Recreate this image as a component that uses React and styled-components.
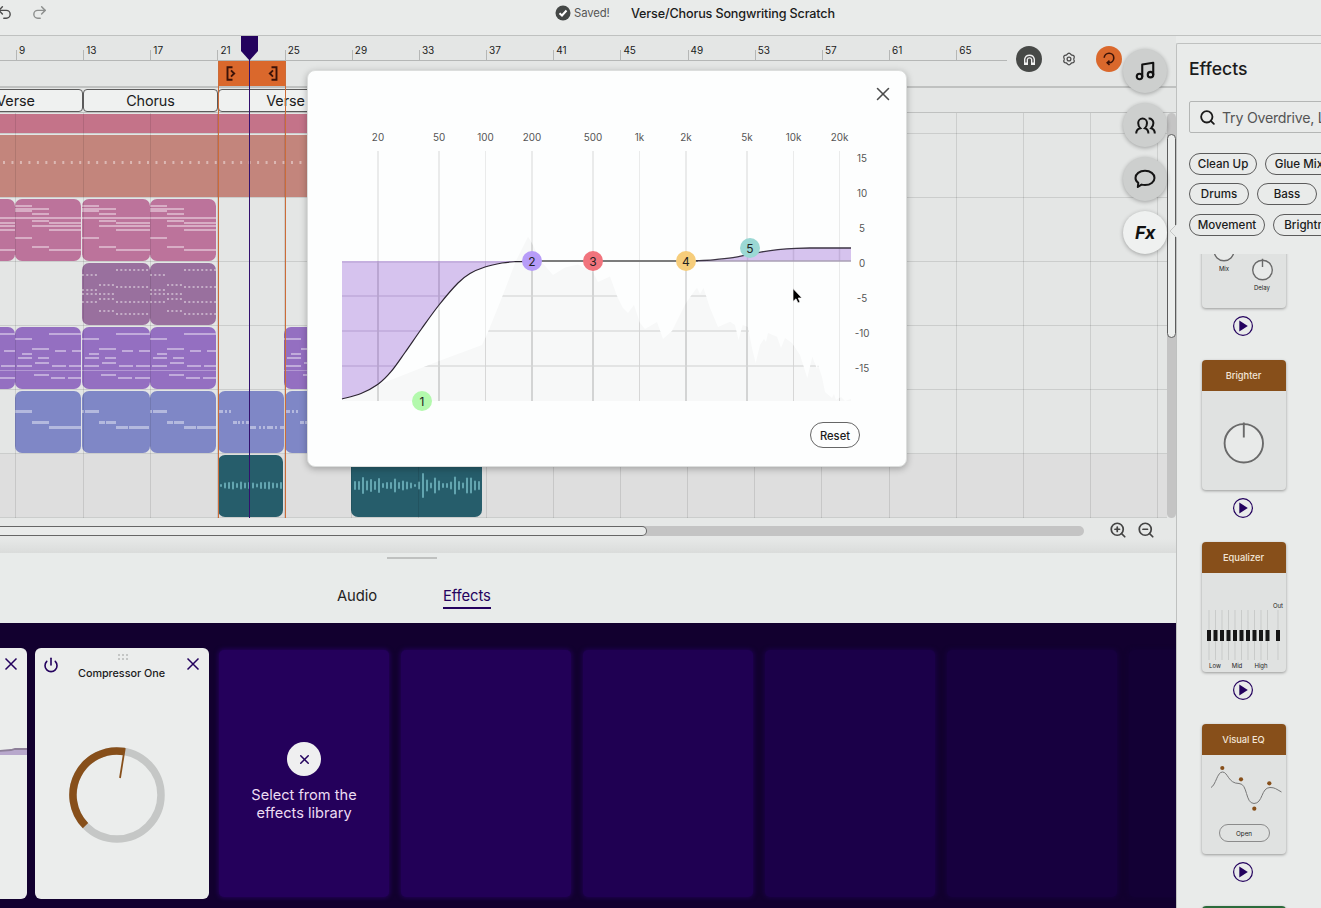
import React from "react";
import styled, { createGlobalStyle } from "styled-components";
import { Music, Power, Redo2, Search, Undo2, X, ZoomIn, ZoomOut } from "lucide-react";

const INK = "#24025e";
const BROWN = "#874f1a";

const GlobalStyle = createGlobalStyle`
  * {
    box-sizing: border-box;
  }
  body {
    margin: 0;
    overflow: hidden;
    background: #e9ebea;
    color: #1b1b1b;
    font-family: Inter, "Liberation Sans", sans-serif;
  }
  svg {
    display: block;
    flex: none;
  }
`;

const marks = [9, 13, 17, 21, 25, 29, 33, 37, 41, 45, 49, 53, 57, 61, 65];

// notes are [x, y, width, height] inside a clip
const chordNotes = [
  [0, 6, 17, 2],
  [0, 9, 17, 4],
  [17, 9, 17, 2],
  [17, 14, 17, 2],
  [0, 18, 68, 2],
  [17, 21, 17, 2],
  [34, 23, 34, 2],
  [17, 26, 17, 2],
  [34, 26, 34, 2],
  [34, 30, 34, 2],
  [0, 38, 17, 2],
  [17, 47, 17, 2],
  [34, 50, 34, 2],
];
const dotted = (x, y, n) => Array.from({ length: n }, (_, i) => [x + i * 4.3, y, 2, 2]);
const arpNotes = [
  ...[11, 26, 30, 38].flatMap((y) => dotted(0, y, 4)),
  ...[21, 30, 35, 47].flatMap((y) => dotted(17, y, 4)),
  ...[6, 23, 38, 50].flatMap((y) => dotted(34, y, 8)),
];
const leadNotes = [
  [34, 6, 34, 2],
  [0, 11, 17, 2],
  [17, 21, 17, 2],
  [40, 23, 11, 2],
  [57, 23, 11, 2],
  [7, 26, 10, 2],
  [3, 30, 14, 2],
  [23, 30, 11, 2],
  [20, 35, 14, 2],
  [2, 38, 15, 2],
  [37, 38, 14, 2],
  [54, 38, 14, 2],
  [19, 47, 15, 2],
  [36, 50, 14, 2],
  [53, 50, 15, 2],
  [0, 43, 68, 0.7],
];
const bassNotes = [
  [0, 19, 17, 3],
  [17, 30, 17, 3],
  [34, 35, 34, 3],
];
const bassNotesCut = [
  [0, 19, 2, 3],
  [3, 19, 14, 3],
  [17, 30, 6, 3],
  [24, 30, 10, 3],
  [34, 35, 12, 3],
  [47, 35, 20, 3],
];
const bassNotesFill = [
  [0, 19, 5, 3],
  [7, 19, 2, 3],
  [11, 19, 2, 3],
  [15, 30, 4, 3],
  [20, 30, 2, 3],
  [24, 30, 2, 3],
  [28, 30, 4, 3],
  [32, 35, 6, 3],
  [41, 35, 2, 3],
  [45, 35, 2, 3],
  [49, 35, 6, 3],
  [57, 35, 2, 3],
  [62, 35, 4, 3],
];
const kickNotes = Array.from({ length: 60 }, (_, i) => [3 + i * 8.47, 26, 2, 3]);

const waveA = [3, 6, 7, 8, 5, 8, 6, 7, 6, 4, 7, 7, 8, 6, 5, 7, 8, 9];
const waveB = [
  9, 9, 17, 10, 13, 9, 15, 5, 7, 7, 14, 7, 10, 8, 6, 3, 8, 25, 12, 6, 16, 10, 5, 5, 8, 18, 9, 6,
  16, 16, 10, 9,
];

const lanes = [
  { clips: [{ width: 500, color: "#c47389", flat: true }], height: 21 },
  { clips: [{ width: 500, color: "#c3857c", flat: true, notes: kickNotes }] },
  {
    clips: [
      { gap: -53, width: 68, color: "#bc739b", notes: chordNotes },
      { width: 66, color: "#bc739b", notes: chordNotes },
      { gap: 1, width: 68, color: "#bc739b", notes: chordNotes },
      { width: 66, color: "#bc739b", notes: chordNotes },
    ],
  },
  {
    clips: [
      { gap: 82, width: 68, color: "#99709e", notes: arpNotes },
      { width: 66, color: "#99709e", notes: arpNotes },
    ],
  },
  {
    clips: [
      { gap: -53, width: 68, color: "#946fc1", notes: leadNotes },
      { width: 66, color: "#946fc1", notes: leadNotes },
      { gap: 1, width: 68, color: "#946fc1", notes: leadNotes },
      { width: 66, color: "#946fc1", notes: leadNotes },
      { gap: 68, width: 68, color: "#946fc1", notes: leadNotes },
    ],
  },
  {
    clips: [
      { gap: 15, width: 66, color: "#7f87c6", notes: bassNotes },
      { gap: 1, width: 68, color: "#7f87c6", notes: bassNotesCut },
      { width: 66, color: "#7f87c6", notes: bassNotesCut },
      { gap: 2, width: 66, color: "#7f87c6", notes: bassNotesFill },
      { gap: 1, width: 68, color: "#7f87c6", notes: bassNotesFill },
    ],
  },
  {
    selected: true,
    clips: [
      { gap: 218, width: 65, color: "#265d6b", wave: waveA, waveX: 2 },
      { gap: 68, width: 131, color: "#265d6b", wave: waveB, waveX: 3 },
    ],
  },
];

const Page = styled.div`
  position: relative;
  display: flex;
  flex-direction: column;
  width: 1321px;
  height: 908px;
  overflow: hidden;
`;

const TopBar = styled.header`
  display: flex;
  flex: none;
  height: 36px;
  padding-bottom: 9px;
  align-items: center;
  border-bottom: 1px solid #bfc1c0;
`;
const History = styled.div`
  display: flex;
  width: 555px;
  margin-left: -4px;
  padding-bottom: 2px;
  gap: 18px;
  color: #4b4b4b;
  svg:last-child {
    color: #8d8f8e;
  }
`;
const Saved = styled.div`
  display: flex;
  align-items: center;
  gap: 3px;
  width: 76px;
  font-size: 11.3px;
  letter-spacing: -0.1px;
  color: #555;
  margin-left: 4px;
  svg {
    margin-bottom: 1px;
  }
`;
const ProjectName = styled.div`
  font-size: 12.6px;
  font-weight: 500;
  white-space: nowrap;
  letter-spacing: -0.15px;
`;

const Body = styled.div`
  display: flex;
  height: 872px;
`;
const Workspace = styled.main`
  display: flex;
  flex-direction: column;
  width: 1176px;
  flex: none;
`;

const Timeline = styled.section`
  position: relative;
  height: 482px;
  background: #e4e6e5;
  overflow: hidden;
`;
const TimelineHead = styled.div`
  display: flex;
  height: 52px;
  border-bottom: 2px solid #bfc1c0;
`;
const RulerColumn = styled.div`
  width: 1007px;
  overflow: hidden;
`;
const Ruler = styled.div`
  display: flex;
  align-items: flex-end;
  height: 25px;
  padding-left: 16px;
  border-bottom: 1px solid #b5b7b6;
`;
const Mark = styled.div`
  display: flex;
  flex: none;
  width: 67.17px;
  height: 10px;
  padding-left: 2px;
  border-left: 1px solid #b5b7b6;
  font-size: 10px;
  line-height: 1;
  span {
    margin-top: -5px;
  }
`;
const LoopRegion = styled.div`
  display: flex;
  justify-content: space-between;
  align-items: center;
  width: 67px;
  height: 26px;
  margin-left: 218px;
  padding: 0 7px 2px 8px;
  background: #da682c;
`;
const Tools = styled.div`
  display: flex;
  align-items: center;
  gap: 14px;
  padding: 0 0 4px 9px;
`;
const Tool = styled.div`
  display: flex;
  align-items: center;
  justify-content: center;
  width: 26px;
  height: 26px;
  border-radius: 50%;
  background: ${(p) => p.$bg || "transparent"};
`;
const Sections = styled.div`
  display: flex;
  height: 25px;
  margin-left: -52px;
  padding-bottom: 1px;
  border-bottom: 1px solid #bfc1c0;
`;
const Section = styled.div`
  flex: none;
  width: 135px;
  height: 23px;
  margin-top: 1px;
  border: 1px solid #5b5b5b;
  border-radius: 4px;
  background: #eff1f0;
  font-size: 14.4px;
  letter-spacing: -0.1px;
  line-height: 22px;
  text-align: center;
`;
const LaneArea = styled.div`
  display: flex;
  height: 405px;
`;
const LaneGrid = styled.div`
  position: relative;
  width: 1167px;
  overflow: hidden;
`;
const Lane = styled.div`
  display: flex;
  height: ${(p) => p.$height || 64}px;
  border-bottom: 1px solid #cbcdcc;
  background: ${(p) => (p.$selected ? "#dedede" : "transparent")};
`;
const ClipBox = styled.div`
  flex: none;
  width: ${(p) => p.$width}px;
  height: ${(p) => (p.$flat && p.$short ? 19 : 62)}px;
  margin: 1px 0 0 ${(p) => p.$gap || 0}px;
  border-radius: ${(p) => (p.$flat ? 0 : 7)}px;
  background: ${(p) => p.$color};
  overflow: hidden;
`;
const GridLines = styled.div`
  position: absolute;
  inset: 0;
  display: flex;
  padding-left: 15.4px;
  i {
    flex: none;
    width: 67.18px;
    border-left: 1px solid rgba(0, 0, 0, 0.1);
  }
`;
const RowScroll = styled.div`
  width: 9px;
  padding-top: 21px;
  border-radius: 5px;
  background: #c4c4c4;
`;
const RowThumb = styled.div`
  width: 9px;
  height: 204px;
  border: 1px solid #5c5c5c;
  border-radius: 5px;
  background: #eceeed;
`;
const Guide = styled.div`
  position: absolute;
  top: ${(p) => p.$top}px;
  bottom: 0;
  left: ${(p) => p.$left}px;
  width: 1px;
  background: ${(p) => p.$color};
`;
const Playhead = styled.svg`
  position: absolute;
  top: 0;
  left: 241px;
`;

const ScrollStrip = styled.div`
  display: flex;
  align-items: center;
  height: 35px;
  padding-bottom: 9px;
  background: linear-gradient(#e6e8e7 60%, #dadcdb);
`;
const SongScroll = styled.div`
  width: 1084px;
  height: 10px;
  border-radius: 0 5px 5px 0;
  background: #c4c4c4;
`;
const SongThumb = styled.div`
  width: 647px;
  height: 10px;
  border: 1px solid #666;
  border-left: 0;
  border-radius: 0 5px 5px 0;
  background: #e9ebea;
`;
const ZoomButtons = styled.div`
  display: flex;
  gap: 10px;
  margin-left: 25px;
  padding-bottom: 2px;
  color: #444;
`;

const TabBar = styled.div`
  height: 70px;
  padding-top: 4px;
  background: #e8ebea;
`;
const DragHandle = styled.div`
  width: 50px;
  height: 2px;
  margin-left: 387px;
  background: #bfc1c0;
`;
const Tabs = styled.nav`
  display: flex;
  gap: 66px;
  padding: 26px 0 0 337px;
`;
const Tab = styled.div`
  height: 24px;
  font-size: 14.8px;
  letter-spacing: -0.1px;
  line-height: 22px;
  color: ${(p) => (p.$active ? INK : "#222")};
  border-bottom: 2px solid ${(p) => (p.$active ? INK : "transparent")};
`;

const Rack = styled.section`
  display: flex;
  gap: 8px;
  flex: 1;
  padding: 25px 0 9px;
  overflow: hidden;
  background: #12002f;
`;
const Pedal = styled.article`
  display: flex;
  flex-direction: column;
  flex: none;
  width: 174px;
  margin-left: ${(p) => p.$offset || 0}px;
  padding: ${(p) => (p.$offset ? "0" : "5px 9px 5px 8px")};
  border-radius: 6px;
  background: #ebedec;
  color: ${INK};
  overflow: hidden;
`;
const PedalTop = styled.div`
  display: flex;
  justify-content: space-between;
  height: 20px;
  > svg {
    margin-top: 4px;
  }
  > svg:nth-child(2) {
    margin-top: 0;
  }
  > svg:last-child {
    margin-top: 3px;
  }
`;
const PedalName = styled.div`
  margin-top: -5px;
  font-size: 10.8px;
  font-weight: 500;
  letter-spacing: -0.03px;
  line-height: 12px;
  color: #1b1b1b;
  text-align: center;
`;
const Slot = styled.article`
  display: flex;
  flex-direction: column;
  align-items: center;
  flex: none;
  width: 170px;
  margin: 2px;
  padding-top: 92px;
  border-radius: 5px;
  background: ${(p) => p.$color};
  box-shadow: 0 0 4px 1px ${(p) => p.$color};
  color: #ecdcf2;
  font-size: 14.6px;
  line-height: 18px;
  text-align: center;
`;
const AddButton = styled.div`
  display: flex;
  align-items: center;
  justify-content: center;
  width: 34px;
  height: 34px;
  margin-bottom: 10px;
  padding-left: 1px;
  border-radius: 50%;
  background: #efeff0;
  color: ${INK};
`;

const Panel = styled.aside`
  flex: 1;
  margin-top: 7px;
  padding-left: 12px;
  border: 1px solid #bfc1c0;
  border-width: 1px 0 0 1px;
  border-radius: 2px 0 0 0;
  background: #e9ebea;
  overflow: hidden;
`;
const PanelTitle = styled.h2`
  margin: 12px 0 19px;
  font-size: 17.6px;
  font-weight: 500;
  line-height: 26px;
`;
const SearchBox = styled.div`
  display: flex;
  align-items: center;
  gap: 6px;
  width: 220px;
  height: 32px;
  padding-left: 9px;
  border: 1px solid #b4b6b5;
  border-radius: 2px;
  color: #555;
  font-size: 14.2px;
  letter-spacing: -0.25px;
  white-space: nowrap;
  svg {
    color: #1b1b1b;
  }
`;
const ChipRow = styled.div`
  display: flex;
  gap: 8px;
  margin-top: ${(p) => p.$top}px;
`;
const Chip = styled.div`
  flex: none;
  width: ${(p) => p.$width}px;
  height: 22px;
  border: 1px solid #5b5b5b;
  border-radius: 11px;
  font-size: 11.6px;
  font-weight: 500;
  line-height: 20px;
  text-align: center;
  white-space: nowrap;
`;
const Library = styled.div`
  height: 654px;
  margin-top: 18px;
  overflow: hidden;
`;
const LibraryList = styled.div`
  display: flex;
  flex-direction: column;
  width: 108px;
  margin-top: -76px;
`;
const LibraryItem = styled.div`
  display: flex;
  flex-direction: column;
  align-items: center;
  gap: 8px;
  height: 182px;
  flex: none;
`;
const EffectCard = styled.div`
  width: 84px;
  height: 130px;
  margin-left: 1px;
  border-radius: 4px;
  background: #e0e2e1;
  box-shadow: 0 1px 3px rgba(0, 0, 0, 0.35);
  overflow: hidden;
`;
const EffectName = styled.div`
  height: 31px;
  background: ${(p) => p.$color};
  color: #f3e6d8;
  font-size: 9.3px;
  font-weight: 500;
  line-height: 32px;
  text-align: center;
`;

const Rail = styled.div`
  position: absolute;
  top: 49px;
  left: 1123px;
  display: flex;
  flex-direction: column;
  gap: 10px;
`;
const RailButton = styled.div`
  display: flex;
  align-items: center;
  justify-content: center;
  width: 44px;
  height: ${(p) => (p.$active ? 43 : 44)}px;
  border-radius: 50%;
  background: ${(p) => (p.$active ? "#eff1f0" : "#cdcfce")};
  box-shadow: 0 1px 4px rgba(0, 0, 0, 0.3);
  font-size: 18px;
  font-style: italic;
  font-weight: 700;
  letter-spacing: -0.5px;
  color: #111;
`;
const PanelPointer = styled.svg`
  position: absolute;
  top: 223px;
  left: 1169px;
`;

const Modal = styled.div`
  position: absolute;
  top: 70px;
  left: 307px;
  display: flex;
  flex-direction: column;
  width: 600px;
  height: 397px;
  border: 1px solid #dcdedd;
  border-radius: 8px;
  background: #fdfefe;
  box-shadow: 0 2px 7px rgba(0, 0, 0, 0.28);
`;
const ModalTop = styled.div`
  display: flex;
  justify-content: flex-end;
  height: 54px;
  padding: 12px 12px 0 0;
  color: #4c4c4c;
`;
const ResetButton = styled.div`
  align-self: flex-end;
  width: 50px;
  height: 26px;
  margin: 7px 46px 0 0;
  border: 1px solid #666;
  border-radius: 13px;
  font-size: 11.2px;
  font-weight: 500;
  line-height: 26px;
  text-align: center;
`;
const Cursor = styled.svg`
  position: absolute;
  top: 287px;
  left: 791px;
`;

const freqs = [
  ["20", 378, 2],
  ["50", 439, 2],
  ["100", 485.5, 1],
  ["200", 532, 2],
  ["500", 593, 2],
  ["1k", 639.5, 1],
  ["2k", 686, 2],
  ["5k", 747, 2],
  ["10k", 793.5, 1],
  ["20k", 839.5, 1],
];
const bands = [
  [1, 422, 401, "#b3f9ad"],
  [2, 532, 261, "#b79cf8"],
  [3, 593, 261, "#f1747d"],
  [4, 686, 261, "#f6cd7b"],
  [5, 750, 248, "#9bd8d4"],
];

// smooth path through a list of points
function spline(points) {
  const at = (i) => points[Math.max(0, Math.min(points.length - 1, i))];
  let d = `M${at(0)}`;
  for (let i = 0; i < points.length - 1; i++) {
    const [a, b, c, e] = [at(i - 1), at(i), at(i + 1), at(i + 2)];
    d += `C${b[0] + (c[0] - a[0]) / 6} ${b[1] + (c[1] - a[1]) / 6}`;
    d += ` ${c[0] - (e[0] - b[0]) / 6} ${c[1] - (e[1] - b[1]) / 6} ${c[0]} ${c[1]}`;
  }
  return d;
}

const curve = spline([
  [342, 399],
  [361, 393.5],
  [378, 384.3],
  [391, 371.7],
  [405, 352.5],
  [421.4, 329],
  [439, 305],
  [458, 283],
  [470, 273.5],
  [485, 267],
  [502, 263],
  [515, 261.7],
  [532, 261.3],
]);
const shelf = spline([
  [696, 260.7],
  [713, 259.8],
  [733, 257.7],
  [748, 254.6],
  [762, 251.8],
  [778, 249.6],
  [796, 248.3],
  [812, 248],
  [851, 248],
]);
const spectrum =
  "M342 401L378 385L439 361L482 345L488 332L502.5 296L515.5 262L528 236.7L532 243L540 260L553 275L565 267.5L578 264.5L593 272L598 282L610 276.5L617 296L623 308L628 313L634 305L640 323L645 329L657 322L663 339L672 331L686 303L693 293L697 287.7L700 294L703.5 288L710 308L718 327L730 321.7L735 325L738.5 340L742.7 325L748 327L752 348L755.7 363L760 345L764 339L766 342L768 333L777 336.7L781 348L785 338L792 343L800 355L807.3 378L812.3 356.7L817 369L818 365L822 377L825 392L832 398L834 394L836 400L841 397L845 401L851 399V401Z";

function VerticalLines({ color }) {
  return freqs.map(([name, x, w]) => (
    <path key={name} d={`M${x} 151V401`} stroke={color} strokeWidth={w * 0.9} />
  ));
}

function EqChart() {
  return (
    <svg width="598" height="290" viewBox="308 125 598 290" fontFamily="Inter, sans-serif">
      <defs>
        <clipPath id="below">
          <path d={spectrum} />
        </clipPath>
        <clipPath id="cut">
          <path d={`${curve}V261H342Z`} />
        </clipPath>
      </defs>
      <VerticalLines color="#e8e9e9" />
      <path d={spectrum} fill="#f7f8f8" />
      <path
        d="M439 310V401M532 261V401M593 261V401M686 261V401M747 261V401"
        stroke="#dcdddd"
        strokeWidth="1.8"
      />
      <g clipPath="url(#below)">
        <path d="M342 296H851M342 331H851M342 366H851" stroke="#e3e4e4" strokeWidth="1.8" />
        <VerticalLines color="#d2d3d3" />
      </g>
      <path d={`${curve}V261H342Z`} fill="#d6c3ee" />
      <g clipPath="url(#cut)">
        <path
          d="M342 296H532M342 331H532M342 366H532M342 262H532"
          stroke="#c5b0df"
          strokeWidth="1.8"
        />
        <path d="M378 261V401M439 261V401" stroke="#b7a4cf" strokeWidth="1.8" />
        <path d="M485.5 261V401" stroke="#b7a4cf" />
      </g>
      <path d={`${shelf}V261H696Z`} fill="#d6c3ee" />
      <path d="M747.5 255V261M793.5 248V261M839.5 248V261" stroke="#c3b0da" strokeWidth="1.5" />
      <path d="M696 261H851" stroke="#a99fb4" strokeWidth="1.6" />
      <path d="M532 261H698" stroke="#7c7c7c" strokeWidth="1.8" />
      <path d={curve} fill="none" stroke="#2b2430" strokeWidth="1.2" />
      <path d={shelf} fill="none" stroke="#3c3444" strokeWidth="1.3" />
      {freqs.map(([name, x]) => (
        <text key={name} x={x} y="141" fontSize="9.9" fill="#555" textAnchor="middle">
          {name}
        </text>
      ))}
      {[15, 10, 5, 0, -5, -10, -15].map((db, i) => (
        <text key={db} x="862" y={162 + i * 35} fontSize="9.8" fill="#555" textAnchor="middle">
          {db}
        </text>
      ))}
      {bands.map(([n, x, y, color]) => (
        <g key={n}>
          <circle cx={x} cy={y} r="10" fill={color} />
          <text x={x} y={y + 5.4} fontSize="12" fill="#222" textAnchor="middle">
            {n}
          </text>
        </g>
      ))}
    </svg>
  );
}

function Clip({ clip, short }) {
  return (
    <ClipBox
      $width={clip.width}
      $gap={clip.gap}
      $color={clip.color}
      $flat={clip.flat}
      $short={short}
    >
      <svg width={clip.width} height="62">
        {clip.notes &&
          clip.notes.map(([x, y, w, h], i) => (
            <rect key={i} x={x} y={y} width={w} height={h} fill="#fff" fillOpacity=".42" />
          ))}
        {clip.wave &&
          clip.wave.map((h, i) => (
            <rect
              key={i}
              x={clip.waveX + i * 4}
              y={30.5 - h / 2}
              width="2"
              height={h}
              rx="1"
              fill="#63a5b0"
            />
          ))}
      </svg>
    </ClipBox>
  );
}

function BracketIcon({ flip }) {
  return (
    <svg width="10" height="15" viewBox="0 0 10 15" fill="none" stroke="#3b1208" strokeWidth="1.9">
      <g transform={flip ? "translate(10 0) scale(-1 1)" : undefined}>
        <path d="M6.5 1.2H1.5V13.8H6.5" />
        <path d="M5 4.3L8.2 7.5L5 10.7" />
      </g>
    </svg>
  );
}

function MagnetIcon() {
  return (
    <svg width="13" height="13" viewBox="0 0 13 13" fill="none">
      <path d="M3 12V6.3A3.6 3.6 0 0 1 10 6.3V12" stroke="#f1f1f1" strokeWidth="4" />
      <path d="M3 9.5V6.3A3.6 3.6 0 0 1 10 6.3V9.5" stroke="#474747" strokeWidth="1.3" />
    </svg>
  );
}

function GearIcon() {
  const points = Array.from({ length: 72 }, (_, i) => {
    const a = (i * Math.PI) / 36;
    const r = 5.3 + 0.5 * Math.cos(6 * a);
    return `${(7 + r * Math.sin(a)).toFixed(2)},${(7 + r * Math.cos(a)).toFixed(2)}`;
  });
  return (
    <svg width="14" height="14" fill="none" stroke="#4c4c4c" strokeWidth="1.3">
      <polygon points={points.join(" ")} />
      <circle cx="7" cy="7" r="1.9" />
    </svg>
  );
}

function LoopIcon() {
  return (
    <svg width="14" height="14" viewBox="0 0 14 14" fill="none" stroke="#3b1208" strokeWidth="1.6">
      <path d="M2.2 5.8A4.8 4.8 0 1 1 7 10.800H5.500" />
      <path d="M7.500 8.600L5.200 10.800L7.500 13" />
    </svg>
  );
}

function PeopleIcon() {
  return (
    <svg width="21" height="17" viewBox="0 0 21 17" fill="none" stroke="#151515" strokeWidth="2">
      <path d="M1.200 16.500C1.200 13.500 2 12 5.300 11.200C3.800 9.800 3.200 8 3.200 6A4.400 4.400 0 0 1 12 6C12 8 11.400 9.800 9.900 11.200C12.600 12 13.400 13.500 13.400 16.500" />
      <path d="M13.600 1.600A4.300 4.300 0 0 1 18.400 6C18.400 8.200 17.700 9.800 16.200 11.200C18.800 12 19.800 13.500 19.800 16.500" />
    </svg>
  );
}

function ChatIcon() {
  return (
    <svg width="22" height="20" viewBox="0 0 22 20" fill="none" stroke="#151515" strokeWidth="2">
      <path
        d="M4.300 13.800C2.400 12.500 1.500 10.800 1.500 8.900C1.500 4.900 5.500 1.800 11 1.800S20.500 4.900 20.500 8.900S16.500 16 11 16C9.700 16 8.600 15.900 7.500 15.600L3.800 18Z"
        strokeLinejoin="round"
      />
    </svg>
  );
}

function PlayIcon() {
  return (
    <svg width="20" height="20" viewBox="0 0 20 20">
      <circle cx="10" cy="10" r="9.4" fill="none" stroke={INK} strokeWidth="1.2" />
      <path d="M6.3 4.6L14.8 10L6.3 15.4Z" fill={INK} />
    </svg>
  );
}

function Knob({ x, y, r, width = 1.4 }) {
  return (
    <g stroke="#6a6a6a" strokeWidth={width}>
      <circle cx={x} cy={y} r={r} fill="#e8eae9" />
      <path d={`M${x} ${y - r - 1.5}V${y - r * 0.3}`} />
    </g>
  );
}

function Caption({ x, y, size = 6, children }) {
  return (
    <text x={x} y={y} fontSize={size} fill="#222" textAnchor="middle">
      {children}
    </text>
  );
}

function DelayFace() {
  return (
    <svg width="84" height="99">
      <Knob x={22} y={42} r={9.8} />
      <Caption x={22} y={62}>
        Mix
      </Caption>
      <Knob x={60.5} y={61} r={9.8} />
      <Caption x={60} y={81}>
        Delay
      </Caption>
    </svg>
  );
}

function BrighterFace() {
  return (
    <svg width="84" height="99">
      <Knob x={41.8} y={52.3} r={19.2} width={1.9} />
    </svg>
  );
}

function EqualizerFace() {
  const sliders = [...Array.from({ length: 10 }, (_, i) => 7 + i * 6.5), 76];
  return (
    <svg width="84" height="99">
      {sliders.map((x) => (
        <g key={x}>
          <path d={`M${x} 37V87`} stroke="#c9cbca" />
          <rect x={x - 2} y="57" width="4" height="11" fill="#161616" />
        </g>
      ))}
      <Caption x={76} y={34.5}>
        Out
      </Caption>
      <Caption x={13} y={95}>
        Low
      </Caption>
      <Caption x={35} y={95}>
        Mid
      </Caption>
      <Caption x={59} y={95}>
        High
      </Caption>
    </svg>
  );
}

function VisualEqFace() {
  return (
    <svg width="84" height="99" fill="none">
      <path
        d="M9 32.5C14 30 15 17 20.5 17C26 17 26 28.5 37 28.5C46 28.5 43 48.5 52 48.5C61 48.5 59 32.5 68 32.5C73 32.5 74 34 79.5 37"
        stroke="#777"
      />
      {[
        [20.3, 13],
        [39, 24.3],
        [52.3, 53.7],
        [67.3, 28.3],
      ].map(([x, y]) => (
        <circle key={x} cx={x} cy={y} r="2.1" fill={BROWN} />
      ))}
      <rect x="17.5" y="69.5" width="50" height="17" rx="8.5" stroke="#8b8b8b" />
      <Caption x={42} y={80.5} size={6.3}>
        Open
      </Caption>
    </svg>
  );
}

// the first card is scrolled up past its name bar
const library = [
  { name: "", color: BROWN, Face: DelayFace },
  { name: "Brighter", color: BROWN, Face: BrighterFace },
  { name: "Equalizer", color: BROWN, Face: EqualizerFace },
  { name: "Visual EQ", color: BROWN, Face: VisualEqFace },
  { name: "", color: "#2c6b3b", Face: BrighterFace },
];

const slots = ["#220057", "#1f0052", "#1b0049", "#17003f", "#130035"];

function CompressorDial() {
  return (
    <svg width="156" height="220" fill="none">
      <circle cx="74" cy="115" r="44" stroke="#c5c7c6" strokeWidth="7.5" />
      <path d="M42.5 145.7A44 44 0 0 1 81 71.5" stroke={BROWN} strokeWidth="7.5" />
      <path d="M81.8 68L77 98" stroke={BROWN} strokeWidth="1.8" />
    </svg>
  );
}

function DragDots() {
  return (
    <svg width="12" height="8" fill="#c4c6c5">
      {[0, 4, 8].map((x) => (
        <g key={x}>
          <rect x={x + 1} width="2" height="2" y="1" />
          <rect x={x + 1} width="2" height="2" y="5" />
        </g>
      ))}
    </svg>
  );
}

export default function App() {
  return (
    <Page>
      <GlobalStyle />
      <TopBar>
        <History>
          <Undo2 size={17} strokeWidth={2} />
          <Redo2 size={17} strokeWidth={2} />
        </History>
        <Saved>
          <svg width="16" height="16" viewBox="0 0 16 16">
            <circle cx="8" cy="8" r="7.5" fill="#444746" />
            <path d="M4.5 8.2L7 10.5L11.5 5.5" fill="none" stroke="#fff" strokeWidth="2" />
          </svg>
          Saved!
        </Saved>
        <ProjectName>Verse/Chorus Songwriting Scratch</ProjectName>
      </TopBar>

      <Body>
        <Workspace>
          <Timeline>
            <TimelineHead>
              <RulerColumn>
                <Ruler>
                  {marks.map((m) => (
                    <Mark key={m}>
                      <span>{m}</span>
                    </Mark>
                  ))}
                </Ruler>
                <LoopRegion>
                  <BracketIcon />
                  <BracketIcon flip />
                </LoopRegion>
              </RulerColumn>
              <Tools>
                <Tool $bg="#474947">
                  <MagnetIcon />
                </Tool>
                <Tool>
                  <GearIcon />
                </Tool>
                <Tool $bg="#da682c">
                  <LoopIcon />
                </Tool>
              </Tools>
            </TimelineHead>
            <Sections>
              <Section>Verse</Section>
              <Section>Chorus</Section>
              <Section>Verse</Section>
            </Sections>
            <LaneArea>
              <LaneGrid>
                {lanes.map((lane, i) => (
                  <Lane key={i} $height={lane.height} $selected={lane.selected}>
                    {lane.clips.map((clip, j) => (
                      <Clip key={j} clip={clip} short={lane.height === 21} />
                    ))}
                  </Lane>
                ))}
                <GridLines>
                  {Array.from({ length: 18 }, (_, i) => (
                    <i key={i} />
                  ))}
                </GridLines>
              </LaneGrid>
              <RowScroll>
                <RowThumb />
              </RowScroll>
            </LaneArea>
            <Guide $top={25} $left={218} $color="#cc6c38" />
            <Guide $top={25} $left={285} $color="#cc6c38" />
            <Guide $top={20} $left={249} $color="#32106e" />
            <Playhead width="17" height="25">
              <path d="M0 0H17V15L8.5 24.5L0 15Z" fill={INK} />
            </Playhead>
          </Timeline>

          <ScrollStrip>
            <SongScroll>
              <SongThumb />
            </SongScroll>
            <ZoomButtons>
              <ZoomIn size={18} strokeWidth={2.3} />
              <ZoomOut size={18} strokeWidth={2.3} />
            </ZoomButtons>
          </ScrollStrip>

          <TabBar>
            <DragHandle />
            <Tabs>
              <Tab>Audio</Tab>
              <Tab $active>Effects</Tab>
            </Tabs>
          </TabBar>

          <Rack>
            <Pedal $offset={-147}>
              <svg width="174" height="251" fill="none">
                <path d="M145 107V103L158 102L162 101H174V107Z" fill="#b8a8cc" />
                <path d="M145 103L158 102L162 101H174" stroke="#8d7f99" strokeWidth="1.8" />
                <path
                  d="M152.5 10.5L163.5 21.5M163.5 10.5L152.5 21.5"
                  stroke={INK}
                  strokeWidth="1.5"
                />
              </svg>
            </Pedal>
            <Pedal>
              <PedalTop>
                <Power size={16} strokeWidth={2.4} />
                <DragDots />
                <svg width="14" height="14" fill="none" stroke={INK} strokeWidth="1.5">
                  <path d="M1.5 2.5L12.5 13.5M12.5 2.5L1.5 13.5" />
                </svg>
              </PedalTop>
              <PedalName>Compressor One</PedalName>
              <CompressorDial />
            </Pedal>
            <Slot $color="#24005b">
              <AddButton>
                <X size={15} strokeWidth={2.4} />
              </AddButton>
              Select from the
              <br />
              effects library
            </Slot>
            {slots.map((color) => (
              <Slot key={color} $color={color} />
            ))}
          </Rack>
        </Workspace>

        <Panel>
          <PanelTitle>Effects</PanelTitle>
          <SearchBox>
            <Search size={17} strokeWidth={2.6} />
            Try Overdrive, Low
          </SearchBox>
          <ChipRow $top={20}>
            <Chip $width={68}>Clean Up</Chip>
            <Chip $width={68}>Glue Mix</Chip>
          </ChipRow>
          <ChipRow $top={8}>
            <Chip $width={60}>Drums</Chip>
            <Chip $width={60}>Bass</Chip>
          </ChipRow>
          <ChipRow $top={9}>
            <Chip $width={76}>Movement</Chip>
            <Chip $width={82}>Brightness</Chip>
          </ChipRow>
          <Library>
            <LibraryList>
              {library.map(({ name, color, Face }, i) => (
                <LibraryItem key={i}>
                  <EffectCard>
                    <EffectName $color={color}>{name}</EffectName>
                    <Face />
                  </EffectCard>
                  <PlayIcon />
                </LibraryItem>
              ))}
            </LibraryList>
          </Library>
        </Panel>
      </Body>

      <Rail>
        <RailButton>
          <Music size={22} strokeWidth={2.3} />
        </RailButton>
        <RailButton>
          <PeopleIcon />
        </RailButton>
        <RailButton>
          <ChatIcon />
        </RailButton>
        <RailButton $active>Fx</RailButton>
      </Rail>
      <PanelPointer width="9" height="16">
        <path d="M8 1L1 8L8 15" fill="#e9ebea" stroke="#c6c8c7" />
      </PanelPointer>

      <Modal>
        <ModalTop>
          <X size={22} strokeWidth={1.7} />
        </ModalTop>
        <EqChart />
        <ResetButton>Reset</ResetButton>
      </Modal>
      <Cursor width="14" height="18">
        <path
          d="M2 1.5V14.5L5 11.8L7 16L9 15L7.2 11H11Z"
          fill="#000"
          stroke="#fff"
          strokeWidth=".7"
        />
      </Cursor>
    </Page>
  );
}
